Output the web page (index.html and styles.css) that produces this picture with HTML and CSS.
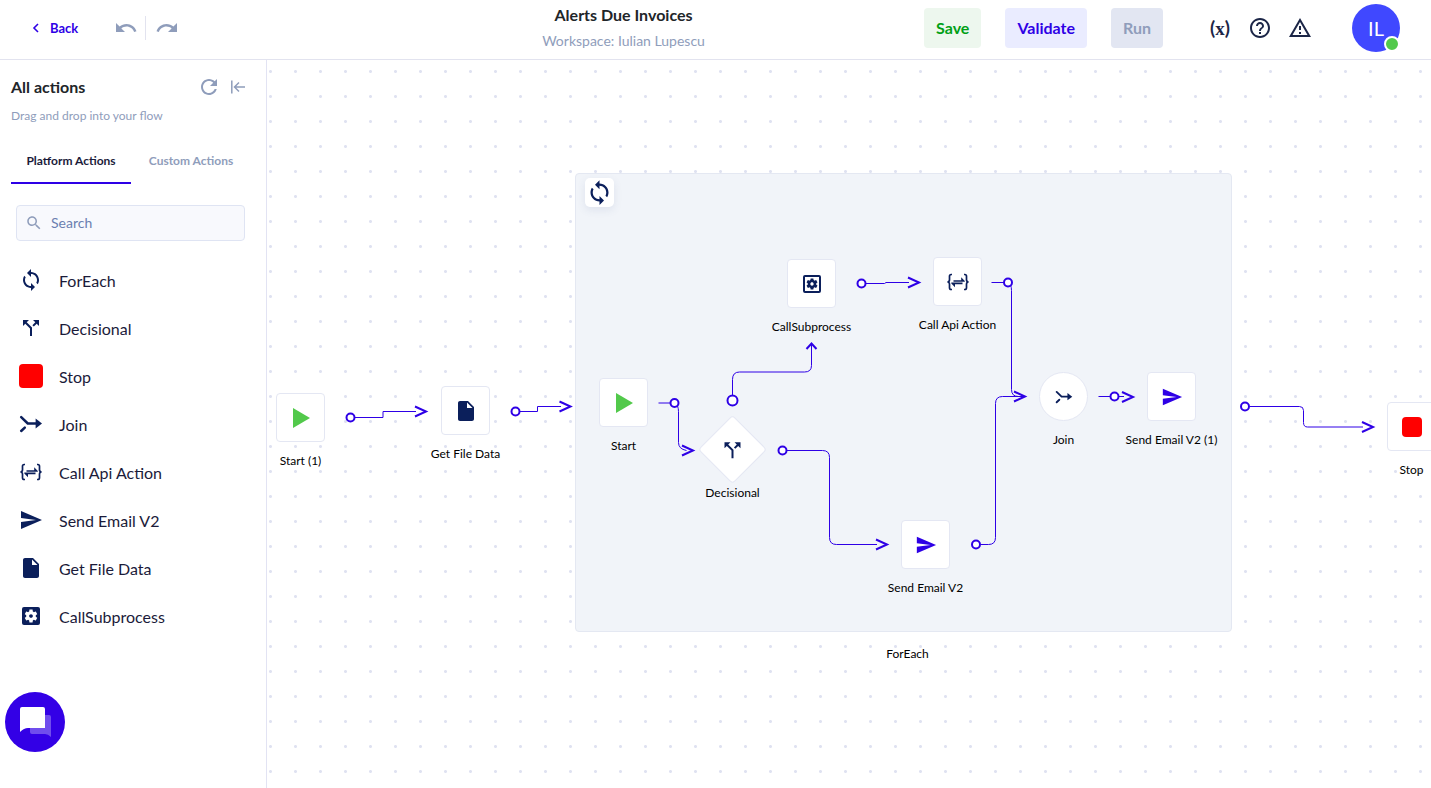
FILE: index.html
```html
<!DOCTYPE html>
<html lang="en">
<head>
  <meta charset="UTF-8" />
  <meta name="viewport" content="width=device-width, initial-scale=1.0"/>
  <title>Alerts Due Invoices</title>
  <link rel="stylesheet" href="styles.css">
</head>
<body>

<!-- shared icons -->
<svg class="sprite" aria-hidden="true">
  <symbol id="i-sync" viewBox="0 0 24 24"><path d="M12 4V1L8 5l4 4V6c3.31 0 6 2.69 6 6 0 1.01-.25 1.97-.7 2.8l1.46 1.46C19.54 15.03 20 13.57 20 12c0-4.42-3.58-8-8-8zm0 14c-3.31 0-6-2.69-6-6 0-1.01.25-1.97.7-2.8L5.24 7.74C4.46 8.97 4 10.43 4 12c0 4.42 3.58 8 8 8v3l4-4-4-4v3z"/></symbol>
  <symbol id="i-split" viewBox="0 0 24 24"><path d="M14 4l2.29 2.29-2.88 2.88 1.42 1.42 2.88-2.88L20 10V4zm-4 0H4v6l2.29-2.29 4.71 4.7V20h2v-8.41l-5.29-5.3z"/></symbol>
  <symbol id="i-join" viewBox="0 0 24 24"><path d="M2.2 5.2 8.8 11.5H18M2.2 19l3.6-3.4" fill="none" stroke="currentColor" stroke-width="2.5" stroke-linecap="round" stroke-linejoin="round"/><path d="M16.6 6.6 23 11.5l-6.4 4.9z"/></symbol>
  <symbol id="i-api" viewBox="0 0 24 24"><path d="M6 4.5H5.2Q3.5 4.5 3.5 6.2V9.8Q3.5 12 1.4 12 3.5 12 3.5 14.2V17.8Q3.5 19.5 5.2 19.5H6M18 4.5h.8q1.7 0 1.7 1.7v3.6q0 2.2 2.1 2.2-2.1 0-2.1 2.2v3.6q0 1.7-1.7 1.7H18" fill="none" stroke="currentColor" stroke-width="1.7"/><path d="M7.5 10.2h7.7V7.2l3.6 3.8v.8H7.5zM16.5 14.2H9v3L5.3 13.4v-.8h11.2z"/></symbol>
  <symbol id="i-send" viewBox="0 0 24 24"><path d="M2.01 21L23 12 2.01 3 2 10l15 2-15 2z"/></symbol>
  <symbol id="i-file" viewBox="0 0 24 24"><path d="M6 2c-1.1 0-1.99.9-1.99 2L4 20c0 1.1.89 2 1.99 2H18c1.1 0 2-.9 2-2V8l-6-6H6zm7 7V3.5L18.5 9H13z"/></symbol>
  <symbol id="i-gear" viewBox="0 0 24 24"><path d="M19.14 12.94c.04-.3.06-.61.06-.94 0-.32-.02-.64-.07-.94l2.03-1.58c.18-.14.23-.41.12-.61l-1.92-3.32c-.12-.22-.37-.29-.59-.22l-2.39.96c-.5-.38-1.03-.7-1.62-.94l-.36-2.54c-.04-.24-.24-.41-.48-.41h-3.84c-.24 0-.43.17-.47.41l-.36 2.54c-.59.24-1.13.57-1.62.94l-2.39-.96c-.22-.08-.47 0-.59.22L2.74 8.87c-.12.21-.08.47.12.61l2.03 1.58c-.05.3-.09.63-.09.94s.02.64.07.94l-2.03 1.58c-.18.14-.23.41-.12.61l1.92 3.32c.12.22.37.29.59.22l2.39-.96c.5.38 1.03.7 1.62.94l.36 2.54c.05.24.24.41.48.41h3.84c.24 0 .44-.17.47-.41l.36-2.54c.59-.24 1.13-.56 1.62-.94l2.39.96c.22.08.47 0 .59-.22l1.92-3.32c.12-.22.07-.47-.12-.61l-2.01-1.58zM12 14.8c-1.6 0-2.8-1.2-2.8-2.8s1.2-2.8 2.8-2.8 2.8 1.2 2.8 2.8-1.2 2.8-2.8 2.8z"/></symbol>
  <symbol id="i-play" viewBox="0 0 24 24"><path d="M4 2v20l17-10z"/></symbol>
</svg>

<header class="topbar">
  <div class="topbar-left">
    <a href="#" class="back">
      <svg width="8" height="12" viewBox="0 0 8 12"><path d="M6 2 2 6l4 4" fill="none" stroke="currentColor" stroke-width="1.6"/></svg>
      Back
    </a>
    <div class="history">
      <button class="icon-btn" aria-label="Undo">
        <svg viewBox="0 0 24 24"><path d="M12.5 8c-2.65 0-5.05.99-6.9 2.6L2 7v9h9l-3.62-3.62c1.39-1.16 3.16-1.88 5.12-1.88 3.54 0 6.55 2.31 7.6 5.5l2.37-.78C21.08 11.03 17.15 8 12.5 8z"/></svg>
      </button>
      <span class="divider"></span>
      <button class="icon-btn" aria-label="Redo">
        <svg viewBox="0 0 24 24"><path d="M18.4 10.6C16.55 8.99 14.15 8 11.5 8c-4.65 0-8.58 3.03-9.96 7.22L3.9 16c1.05-3.19 4.05-5.5 7.6-5.5 1.95 0 3.73.72 5.12 1.88L13 16h9V7l-3.6 3.6z"/></svg>
      </button>
    </div>
  </div>

  <div class="flow-title">
    <h1>Alerts Due Invoices</h1>
    <p>Workspace: Iulian Lupescu</p>
  </div>

  <div class="topbar-right">
    <div class="buttons">
      <button class="btn btn-save">Save</button>
      <button class="btn btn-validate">Validate</button>
      <button class="btn btn-run" disabled>Run</button>
    </div>
    <div class="tools">
      <button class="icon-btn variables" aria-label="Variables">(<span>x</span>)</button>
      <button class="icon-btn" aria-label="Help">
        <svg viewBox="0 0 24 24"><path d="M11 18h2v-2h-2v2zm1-16C6.48 2 2 6.48 2 12s4.48 10 10 10 10-4.48 10-10S17.52 2 12 2zm0 18c-4.41 0-8-3.59-8-8s3.59-8 8-8 8 3.59 8 8-3.59 8-8 8zm0-14c-2.21 0-4 1.79-4 4h2c0-1.1.9-2 2-2s2 .9 2 2c0 2-3 1.75-3 5h2c0-2.25 3-2.5 3-5 0-2.21-1.79-4-4-4z"/></svg>
      </button>
      <button class="icon-btn" aria-label="Warnings">
        <svg viewBox="0 0 24 24"><path d="M12 5.99L19.53 19H4.47L12 5.99M12 2L1 21h22L12 2zm1 14h-2v2h2v-2zm0-6h-2v4h2v-4z"/></svg>
      </button>
    </div>
    <div class="avatar">IL<span class="status"></span></div>
  </div>
</header>

<main class="workspace">
  <aside class="sidebar">
    <div class="sidebar-head">
      <h2>All actions</h2>
      <button class="icon-btn" aria-label="Refresh">
        <svg viewBox="0 0 24 24"><path d="M17.65 6.35C16.2 4.9 14.21 4 12 4c-4.42 0-7.99 3.58-7.99 8s3.57 8 7.99 8c3.73 0 6.84-2.55 7.73-6h-2.08c-.82 2.33-3.04 4-5.65 4-3.31 0-6-2.69-6-6s2.69-6 6-6c1.66 0 3.14.69 4.22 1.78L13 11h7V4l-2.35 2.35z"/></svg>
      </button>
      <button class="icon-btn collapse" aria-label="Collapse panel">
        <svg viewBox="0 0 16 16"><path d="M1.8 1.5v13M15 8H4.5M9 3.5 4.5 8 9 12.5" fill="none" stroke="currentColor" stroke-width="1.5"/></svg>
      </button>
    </div>
    <p class="hint">Drag and drop into your flow</p>

    <div class="tabs" role="tablist">
      <button class="tab active" role="tab" aria-selected="true">Platform Actions</button>
      <button class="tab" role="tab" aria-selected="false">Custom Actions</button>
    </div>

    <label class="search">
      <svg viewBox="0 0 24 24"><path d="M15.5 14h-.79l-.28-.27C15.41 12.59 16 11.11 16 9.5 16 5.91 13.09 3 9.5 3S3 5.91 3 9.5 5.91 16 9.5 16c1.61 0 3.09-.59 4.23-1.57l.27.28v.79l5 4.99L20.49 19l-4.99-5zm-6 0C7.01 14 5 11.99 5 9.5S7.01 5 9.5 5 14 7.01 14 9.5 11.99 14 9.5 14z"/></svg>
      <input type="text" placeholder="Search" aria-label="Search">
    </label>

    <ul class="actions">
      <li><svg><use href="#i-sync"/></svg>ForEach</li>
      <li><svg><use href="#i-split"/></svg>Decisional</li>
      <li><span class="stop-shape"></span>Stop</li>
      <li><svg><use href="#i-join"/></svg>Join</li>
      <li><svg><use href="#i-api"/></svg>Call Api Action</li>
      <li><svg><use href="#i-send"/></svg>Send Email V2</li>
      <li><svg><use href="#i-file"/></svg>Get File Data</li>
      <li>
        <svg viewBox="0 0 24 24"><rect x="3" y="3" width="18" height="18" rx="2"/><use class="gear-light" href="#i-gear" x="4" y="4" width="16" height="16"/></svg>CallSubprocess
      </li>
    </ul>
  </aside>

  <section class="canvas">
    <div class="group"></div>
    <div class="group-badge"><svg><use href="#i-sync"/></svg></div>
    <div class="group-label">ForEach</div>

    <svg class="edges" aria-hidden="true">
      <!-- Start (1) > Get File Data -->
      <path d="M88 357.5H116V351.5H149"/>
      <path class="head" d="M148 346.5l11 5-11 5"/>
      <circle cx="83.5" cy="357.5" r="4"/>

      <!-- Get File Data > ForEach -->
      <path d="M253 351.5H270.5V346.5H294"/>
      <path class="head" d="M292.500 341.5l11 5-11 5"/>
      <circle cx="248.5" cy="351.5" r="4"/>

      <!-- Start > Decisional -->
      <path d="M391.5 343H407.5Q411.5 345 411.5 351.5V382.5Q411.5 389 419.5 390.5"/>
      <path class="head" d="M415 385.500l11 5-11 5"/>
      <circle cx="407.5" cy="343" r="4"/>

      <!-- Decisional > CallSubprocess -->
      <path d="M465.5 336V319.5Q465.5 312 472.500 312H537.5Q544.5 312 544.5 305.5V284"/>
      <path class="head" d="M539.500 289l5-5.500 5 5.500"/>
      <circle cx="465.5" cy="340.5" r="5"/>

      <!-- Decisional > Send Email V2 -->
      <path d="M520 390.5H555.5Q562.5 390.5 562.5 397.5V477.5Q562.5 484.5 569.5 484.5H610"/>
      <path class="head" d="M609 479.5l11 5-11 5"/>
      <circle cx="515.5" cy="390.5" r="4"/>

      <!-- CallSubprocess > Call Api Action -->
      <path d="M599 223.5H617.5L619 222.5H642"/>
      <path class="head" d="M641 217.5l11 5-11 5"/>
      <circle cx="594.5" cy="223.5" r="4"/>

      <!-- Call Api Action > Join -->
      <path d="M724.5 222.5H741Q744.5 224 744.5 230.5V329.5Q744.5 336.5 751.5 336.5"/>
      <circle cx="741" cy="222.5" r="4"/>

      <!-- Send Email V2 > Join -->
      <path d="M713.5 484.5H721.5Q728.5 484.5 728.5 477.5V343.5Q728.5 336.5 735.5 336.5H757"/>
      <path class="head" d="M747 331.5l11 5-11 5"/>
      <circle cx="709" cy="484.5" r="4"/>

      <!-- Join > Send Email V2 (1) -->
      <path d="M831.5 336.5H857"/>
      <path class="head" d="M855 332l11 5-11 5"/>
      <circle cx="847.5" cy="336.5" r="4"/>

      <!-- ForEach > Stop -->
      <path d="M982.5 346.5H1032.5Q1036.5 346.5 1036.5 350.5V362.5Q1036.5 367 1040.5 367H1096"/>
      <path class="head" d="M1095 362l11 5-11 5"/>
      <circle cx="978" cy="346.5" r="4"/>
    </svg>

    <div class="node node-start-1">
      <div class="node-box play"><svg><use href="#i-play"/></svg></div>
      <span>Start (1)</span>
    </div>
    <div class="node node-get-file">
      <div class="node-box"><svg><use href="#i-file"/></svg></div>
      <span>Get File Data</span>
    </div>
    <div class="node node-start">
      <div class="node-box play"><svg><use href="#i-play"/></svg></div>
      <span>Start</span>
    </div>
    <div class="node node-decisional">
      <div class="node-box diamond"><svg><use href="#i-split"/></svg></div>
      <span>Decisional</span>
    </div>
    <div class="node node-subprocess">
      <div class="node-box">
        <svg viewBox="0 0 24 24"><rect x="4" y="4" width="16" height="16" rx="1" fill="none" stroke="currentColor" stroke-width="2"/><use href="#i-gear" x="5" y="5" width="14" height="14"/></svg>
      </div>
      <span>CallSubprocess</span>
    </div>
    <div class="node node-api">
      <div class="node-box"><svg><use href="#i-api"/></svg></div>
      <span>Call Api Action</span>
    </div>
    <div class="node node-join">
      <div class="node-box round small"><svg><use href="#i-join"/></svg></div>
      <span>Join</span>
    </div>
    <div class="node node-email">
      <div class="node-box email"><svg><use href="#i-send"/></svg></div>
      <span>Send Email V2</span>
    </div>
    <div class="node node-email-1">
      <div class="node-box email"><svg><use href="#i-send"/></svg></div>
      <span>Send Email V2 (1)</span>
    </div>
    <div class="node node-stop">
      <div class="node-box"><i class="stop-shape"></i></div>
      <span>Stop</span>
    </div>
  </section>
</main>

<button class="chat" aria-label="Open chat">
  <svg width="32" height="32" viewBox="-1 0 32 32">
    <path d="M10 9h19q2 0 2 2v20q-3-3-6-3H12q-2 0-2-2z" fill="#fff" opacity=".3"/>
    <path d="M2 1h21q2 0 2 2v19H8q-4 0-8 4V3q0-2 2-2z" fill="#fff"/>
  </svg>
</button>

</body>
</html>
```
FILE: styles.css
```css
* {
  box-sizing: border-box;
}

body {
  font-family: Lato, "Liberation Sans", sans-serif;
  margin: 0;
  min-height: 100vh;
  display: flex;
  flex-direction: column;
  background: white;
  color: #1b1b3a;
}

h1, h2, p, ul {
  margin: 0;
  padding: 0;
}

button, input {
  font-family: inherit;
}

button {
  border: none;
  background: none;
  padding: 0;
  cursor: pointer;
}

svg {
  display: block;
  fill: currentColor;
}

.sprite {
  position: absolute;
  width: 0;
  height: 0;
}

.icon-btn {
  width: 24px;
  height: 24px;
  color: #8f9dbb;
}

/* top bar */

.topbar {
  display: flex;
  height: 60px;
  border-bottom: 1px solid #e2e3ef;
}

.topbar-left {
  flex: 0 0 323px;
  display: flex;
  align-items: center;
  height: 56px;
  padding-left: 32px;
}

.back {
  display: flex;
  align-items: center;
  gap: 10px;
  width: 82px;
  font-size: 13px;
  font-weight: bold;
  color: #2e00e6;
  text-decoration: none;
}

.history {
  display: flex;
  align-items: center;
}

.divider {
  width: 1px;
  height: 24px;
  margin: 0 9px 0 7px;
  background: #e2e3ef;
}

.flow-title {
  flex: 1;
  text-align: center;
}

.flow-title h1 {
  padding-top: 3px;
  font-size: 16px;
  line-height: 24px;
  color: #212529;
}

.flow-title p {
  padding-top: 2px;
  font-size: 14px;
  line-height: 24px;
  color: #8f9dbb;
}

.topbar-right {
  display: flex;
  align-items: center;
  height: 56px;
  padding-right: 31px;
}

.buttons {
  display: flex;
  gap: 24px;
}

.btn {
  height: 40px;
  padding: 0 12px 2px;
  border-radius: 4px;
  font-size: 16px;
  font-weight: bold;
}

.btn-save {
  background: #edf7ee;
  color: #00a015;
}

.btn-validate {
  background: #eaecff;
  color: #2e00e6;
}

.btn-run {
  background: #e2e6f2;
  color: #8f9dbb;
}

.tools {
  display: flex;
  gap: 16px;
  margin: 0 40px 0 45px;
}

.tools .icon-btn {
  color: #1c2647;
}

.tools .variables {
  font-size: 19px;
  font-weight: bold;
  line-height: 22px;
}

.variables span {
  font-family: "Liberation Serif", serif;
}

.avatar {
  position: relative;
  width: 48px;
  height: 48px;
  border-radius: 50%;
  background: #4048ff;
  color: white;
  font-size: 20px;
  line-height: 48px;
  text-align: center;
}

.status {
  position: absolute;
  right: 0;
  bottom: 0;
  width: 16px;
  height: 16px;
  border: 2px solid white;
  border-radius: 50%;
  background: #52c94b;
}

/* sidebar */

.workspace {
  flex: 1;
  display: flex;
}

.sidebar {
  flex: 0 0 267px;
  border-right: 1px solid #e2e3f3;
}

.sidebar-head {
  display: flex;
  align-items: center;
  padding: 15px 20px 0 11px;
}

.sidebar-head h2 {
  flex: 1;
  font-size: 16px;
  line-height: 24px;
  color: #212529;
}

.sidebar-head .collapse {
  width: 16px;
  height: 16px;
  margin-left: 9px;
}

.hint {
  padding: 9px 11px 0;
  font-size: 12px;
  line-height: 16px;
  color: #8f9dbb;
}

.tabs {
  display: flex;
  margin: 14px 11px 21px;
}

.tab {
  height: 46px;
  width: 120px;
  border-bottom: 2px solid transparent;
  font-size: 12px;
  font-weight: bold;
  color: #8f9dbb;
}

.tab.active {
  border-color: #2e00e6;
  color: #1b1b3a;
}

.search {
  display: flex;
  align-items: center;
  height: 36px;
  margin: 0 21px 0 16px;
  padding-left: 8px;
  border: 1px solid #dfe4f3;
  border-radius: 4px;
  background: #f8f9fd;
}

.search svg {
  flex: none;
  width: 18px;
  height: 18px;
  color: #8f9dbb;
}

.search input {
  flex: 1;
  min-width: 0;
  padding: 0 8px 2px;
  border: none;
  outline: none;
  background: none;
  font-size: 14px;
}

.search input::placeholder {
  color: #6b7fb0;
}

.actions {
  padding: 15px 19px;
  list-style: none;
}

.actions li {
  display: flex;
  align-items: center;
  gap: 16px;
  height: 48px;
  font-size: 16px;
}

.actions svg {
  width: 24px;
  height: 24px;
  color: #0b1f5b;
}

.gear-light {
  color: white;
  fill: white;
}

.stop-shape {
  width: 24px;
  height: 24px;
  border-radius: 4px;
  background: #ff0000;
}

/* flow canvas */

.canvas {
  flex: 1;
  position: relative;
  overflow: hidden;
  background-image: radial-gradient(circle, #dfe2f1 1px, transparent 2px);
  background-size: 25px 25px;
  background-position: -9px -1px;
}

.group {
  position: absolute;
  left: 308px;
  top: 113px;
  width: 657px;
  height: 459px;
  border: 1px solid #e4e8f2;
  border-radius: 4px;
  background: #f1f4f9;
}

.group-badge {
  position: absolute;
  left: 318px;
  top: 118px;
  display: flex;
  align-items: center;
  justify-content: center;
  width: 29px;
  height: 29px;
  border-radius: 5px;
  background: white;
  color: #0b1f5b;
  box-shadow: 0 3px 8px rgba(60, 80, 140, 0.1);
}

.group-badge svg {
  width: 27px;
  height: 27px;
}

.group-label {
  position: absolute;
  left: 580px;
  top: 586px;
  width: 121px;
  text-align: center;
  font-size: 12px;
  line-height: 16px;
  color: black;
}

.edges {
  position: absolute;
  left: 0;
  top: 0;
  width: 100%;
  height: 100%;
  fill: none;
  stroke: #2e00e6;
}

.edges .head {
  stroke-width: 2;
}

.edges circle {
  fill: white;
  stroke-width: 2;
}

.node {
  position: absolute;
  display: flex;
  flex-direction: column;
  align-items: center;
  gap: 11px;
  width: 121px;
  font-size: 12px;
  line-height: 16px;
  color: black;
}

.node-box {
  display: flex;
  align-items: center;
  justify-content: center;
  width: 49px;
  height: 49px;
  border: 1px solid #e4e7f3;
  border-radius: 4px;
  background: white;
  color: #0b1f5b;
}

.node-box svg {
  width: 24px;
  height: 24px;
}

.node-box.play {
  color: #52c94b;
}

.node-box.email {
  color: #2e00e6;
}

.node-box.email svg {
  width: 22px;
  height: 22px;
}

.node-box.round {
  border-radius: 50%;
}

.node-box.small svg {
  width: 18px;
  height: 18px;
}

.node-box.diamond {
  transform: rotate(45deg);
}

.node-box.diamond svg {
  transform: rotate(-45deg);
}

.node .stop-shape {
  width: 20px;
  height: 20px;
}

.node-start-1 { left: -27px; top: 333px; }
.node-get-file { left: 138px; top: 326px; }
.node-start { left: 296px; top: 318px; }
.node-decisional { left: 405px; top: 365px; }
.node-subprocess { left: 484px; top: 199px; }
.node-api { left: 630px; top: 197px; }
.node-join { left: 736px; top: 312px; }
.node-email { left: 598px; top: 460px; }
.node-email-1 { left: 844px; top: 312px; }
.node-stop { left: 1084px; top: 342px; }

/* chat launcher */

.chat {
  position: fixed;
  left: 5px;
  bottom: 36px;
  display: flex;
  align-items: center;
  justify-content: center;
  width: 60px;
  height: 60px;
  border-radius: 50%;
  background: #3300e6;
}
```
